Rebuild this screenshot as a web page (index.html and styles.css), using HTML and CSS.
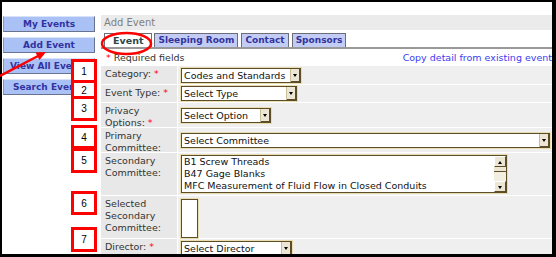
FILE: index.html
```html
<!DOCTYPE html>
<html lang="en">
<head>
    <meta charset="UTF-8">
    <meta name="viewport" content="width=device-width, initial-scale=1.0">
    <title>Add Event</title>
    <link rel="stylesheet" href="styles.css">
</head>
<body>
    <div class="frame">
        <div class="nav">
            <a class="nav-btn" href="#">My Events</a>
            <a class="nav-btn" href="#">Add Event</a>
            <a class="nav-btn" href="#">View All Events</a>
            <a class="nav-btn" href="#">Search Events</a>
        </div>
        <div class="main">
            <div class="page-title">Add Event</div>
            <div class="tabs">
                <span class="tab active">Event</span>
                <span class="tab">Sleeping Room</span>
                <span class="tab">Contact</span>
                <span class="tab">Sponsors</span>
            </div>
            <div class="req-row">
                <span><span class="star">*</span> Required fields</span>
                <a class="copy-link" href="#">Copy detail from existing event</a>
            </div>
            <div class="form-grid">
                <div class="lbl">Category:<span class="star">*</span></div>
                <div class="fld"><div class="sel w-cat">Codes and Standards<span class="arr"></span></div></div>

                <div class="lbl">Event Type:<span class="star">*</span></div>
                <div class="fld"><div class="sel w-type">Select Type<span class="arr"></span></div></div>

                <div class="lbl">Privacy Options:<span class="star">*</span></div>
                <div class="fld"><div class="sel w-priv">Select Option<span class="arr"></span></div></div>

                <div class="lbl">Primary Committee:</div>
                <div class="fld"><div class="sel w-prim">Select Committee<span class="arr"></span></div></div>

                <div class="lbl">Secondary Committee:</div>
                <div class="fld top">
                    <div class="list w-sec">
                        <div class="items">
                            <div>B1 Screw Threads</div>
                            <div>B47 Gage Blanks</div>
                            <div>MFC Measurement of Fluid Flow in Closed Conduits</div>
                        </div>
                        <div class="scroll">
                            <span class="sbtn up"></span>
                            <span class="thumb"></span>
                            <span class="track"></span>
                            <span class="sbtn down"></span>
                        </div>
                    </div>
                </div>

                <div class="lbl">Selected Secondary Committee:</div>
                <div class="fld top"><div class="list w-selected"></div></div>

                <div class="lbl">Director:<span class="star">*</span></div>
                <div class="fld top"><div class="sel w-dir">Select Director<span class="arr"></span></div></div>
            </div>
        </div>
    </div>

    <!-- annotations drawn over the screenshot -->
    <svg class="ink" width="556" height="257" viewBox="0 0 556 257">
        <ellipse cx="126.5" cy="43.5" rx="24.5" ry="10.5" fill="none" stroke="#f00" stroke-width="2.5"/>
        <line x1="0" y1="76" x2="39" y2="55.5" stroke="#f00" stroke-width="2.5"/>
        <polygon points="46,52 39.5,60 35.5,52.5" fill="#f00"/>
    </svg>
    <div class="mark m1">1</div>
    <div class="mark m2">2</div>
    <div class="mark m3">3</div>
    <div class="mark m4">4</div>
    <div class="mark m5">5</div>
    <div class="mark m6">6</div>
    <div class="mark m7">7</div>
</body>
</html>
```

FILE: styles.css
```css
html, body { margin: 0; padding: 0; }
body { position: relative; width: 556px; height: 257px; overflow: hidden; background: #000; font-family: "DejaVu Sans", Verdana, sans-serif; }

.frame { box-sizing: border-box; width: 556px; height: 257px; border-style: solid; border-color: #000; border-width: 2px 4px 3px 2px; background: #fff; display: flex; overflow: hidden; }

.nav { width: 92px; padding: 14px 0 0 1px; display: flex; flex-direction: column; gap: 5px; flex-shrink: 0; }
.nav-btn { display: block; box-sizing: border-box; height: 16px; line-height: 14px; background: #aac1f6; border: 1px solid; border-color: #d8e2fb #67738f #67738f #8a96b3; color: #3232a0; font-size: 9px; font-weight: bold; text-align: center; text-decoration: none; white-space: nowrap; overflow: hidden; }

.main { flex: 1; margin-left: 6px; padding-top: 13px; min-width: 0; }
.page-title { height: 15px; line-height: 15px; background: #ebebeb; color: #808080; font-size: 10px; padding-left: 3px; }

.tabs { margin-top: 3px; height: 14px; border-bottom: 2px solid #999; padding-left: 3px; display: flex; gap: 3px; align-items: flex-end; }
.tab { box-sizing: border-box; height: 14px; line-height: 13px; padding: 0 3px; border: 1px solid #6d6d7a; border-bottom: none; background: #c2ccf4; color: #33339c; font-size: 9px; font-weight: bold; white-space: nowrap; }
.tab.active { background: #fff; color: #2e4848; font-size: 9.5px; padding: 0 8px; margin-right: -1px; }

.req-row { height: 17px; line-height: 17px; display: flex; justify-content: space-between; font-size: 9.5px; color: #333; padding-left: 5px; }
.star { color: #f00; margin-left: 3px; }
.req-row .star { margin-left: 0; }
.copy-link { color: #3c3cf0; text-decoration: none; }

.form-grid { display: grid; grid-template-columns: 76px 1fr; grid-template-rows: 18px 17px 24px 24px 42px 42px 20px; gap: 1px; background: #fff; }
.lbl { background: #e8e8e8; padding: 2px 4px 0; font-size: 9.5px; line-height: 12px; color: #333; }
.fld { background: #efefef; padding-left: 3px; display: flex; align-items: center; }
.fld.top { align-items: flex-start; padding-top: 2px; }

.sel { box-sizing: border-box; position: relative; height: 15px; line-height: 13px; border: 1px solid #5c4c28; box-shadow: 0 0 0 1px #e9ddb2; background: #fff; font-size: 9.5px; color: #111; padding-left: 2px; white-space: nowrap; overflow: hidden; }
.arr { position: absolute; right: 0; top: 0; width: 9px; height: 13px; background: #ece7d4; border-left: 1px solid #c9bf9a; box-shadow: inset -1px -1px 0 #5c4c28; }
.arr::after { content: ""; position: absolute; left: 2px; top: 5px; border-style: solid; border-width: 3px 2.5px 0; border-color: #000 transparent transparent; }

.w-cat { width: 120px; }
.w-type { width: 116px; }
.w-priv { width: 90px; }
.w-prim { width: 369px; }
.w-dir { width: 111px; }

.list { box-sizing: border-box; display: flex; border: 1px solid #5c4c28; box-shadow: 0 0 0 1px #e9ddb2; background: #fff; font-size: 9.5px; color: #111; }
.w-sec { width: 326px; height: 38px; }
.w-selected { width: 17px; height: 39px; margin-top: 1px; }
.items { flex: 1; line-height: 12px; padding: 0 2px; white-space: nowrap; overflow: hidden; }
.scroll { width: 12px; display: flex; flex-direction: column; background: #f3efe0; }
.sbtn { position: relative; height: 11px; box-sizing: border-box; background: #ece7d4; border: 1px solid #cfc6a4; border-color: #fff #5c4c28 #5c4c28 #fff; }
.sbtn::after { content: ""; position: absolute; left: 3px; top: 4px; border-style: solid; border-color: #000 transparent; }
.sbtn.up::after { border-width: 0 2.5px 3px; }
.sbtn.down::after { border-width: 3px 2.5px 0; }
.thumb { height: 4px; background: #ece7d4; border-bottom: 1px solid #5c4c28; }
.track { flex: 1; }

.ink { position: absolute; left: 0; top: 0; pointer-events: none; }
.mark { position: absolute; left: 71px; width: 26px; box-sizing: border-box; border: 3px solid #f00; background: #fff; display: flex; align-items: center; justify-content: center; font-family: "Liberation Sans", Arial, sans-serif; font-size: 10px; color: #000; }
.m1 { top: 59px; height: 24px; }
.m2 { top: 80px; height: 20px; }
.m3 { top: 96px; height: 25px; }
.m4 { top: 125px; height: 24px; }
.m5 { top: 148px; height: 25px; }
.m6 { top: 191px; height: 24px; }
.m7 { top: 227px; height: 25px; }
```
